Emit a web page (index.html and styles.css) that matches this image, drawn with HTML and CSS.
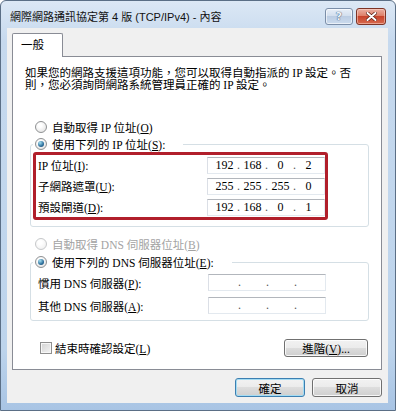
FILE: index.html
```html
<!DOCTYPE html>
<html>
<head>
  <title>網際網路通訊協定第 4 版 (TCP/IPv4) - 內容</title>
  <link rel="stylesheet" href="styles.css">
</head>
<body>
  <div id="window">
    <div id="titlebar">
      <span id="title">網際網路通訊協定第 4 版 (TCP/IPv4) - 內容</span>
      <div id="caption-btns">
        <span class="cap-btn" id="help-btn">?</span>
        <span class="cap-btn" id="close-btn">
          <svg width="11" height="9" viewBox="0 0 11 9">
            <path d="M1.5 1 L9.5 8 M9.5 1 L1.5 8" stroke="#5a1d12" stroke-width="3.4" stroke-linecap="round"/>
            <path d="M1.5 1 L9.5 8 M9.5 1 L1.5 8" stroke="#fff" stroke-width="2" stroke-linecap="round"/>
          </svg>
        </span>
      </div>
    </div>

    <div id="client">
      <div id="tabs"><span class="tab">一般</span></div>

      <div id="panel">
        <p id="intro">如果您的網路支援這項功能，您可以取得自動指派的 IP 設定。否<br>則，您必須詢問網路系統管理員正確的 IP 設定。</p>

        <div class="opts">
          <label class="radio-row"><span class="radio"></span><span>自動取得 IP 位址(<u>O</u>)</span></label>

          <fieldset class="group" id="ip-group">
            <legend><label class="radio-row in-legend"><span class="radio checked"></span><span>使用下列的 IP 位址(<u>S</u>):</span></label></legend>
            <div id="highlight">
              <div class="field-row">
                <span>IP 位址(<u>I</u>):</span>
                <div class="ip"><span class="seg">192</span><span class="dot">.</span><span class="seg">168</span><span class="dot">.</span><span class="seg">0</span><span class="dot">.</span><span class="seg">2</span></div>
              </div>
              <div class="field-row">
                <span>子網路遮罩(<u>U</u>):</span>
                <div class="ip"><span class="seg">255</span><span class="dot">.</span><span class="seg">255</span><span class="dot">.</span><span class="seg">255</span><span class="dot">.</span><span class="seg">0</span></div>
              </div>
              <div class="field-row">
                <span>預設閘道(<u>D</u>):</span>
                <div class="ip"><span class="seg">192</span><span class="dot">.</span><span class="seg">168</span><span class="dot">.</span><span class="seg">0</span><span class="dot">.</span><span class="seg">1</span></div>
              </div>
            </div>
          </fieldset>

          <label class="radio-row disabled" id="dns-auto"><span class="radio"></span><span>自動取得 DNS 伺服器位址(<u>B</u>)</span></label>

          <fieldset class="group" id="dns-group">
            <legend><label class="radio-row in-legend"><span class="radio checked"></span><span>使用下列的 DNS 伺服器位址(<u>E</u>):</span></label></legend>
            <div class="dns-rows">
              <div class="field-row">
                <span>慣用 DNS 伺服器(<u>P</u>):</span>
                <div class="ip"><span class="seg"></span><span class="dot">.</span><span class="seg"></span><span class="dot">.</span><span class="seg"></span><span class="dot">.</span><span class="seg"></span></div>
              </div>
              <div class="field-row">
                <span>其他 DNS 伺服器(<u>A</u>):</span>
                <div class="ip"><span class="seg"></span><span class="dot">.</span><span class="seg"></span><span class="dot">.</span><span class="seg"></span><span class="dot">.</span><span class="seg"></span></div>
              </div>
            </div>
          </fieldset>

          <div id="check-row">
            <label class="check-label"><span class="checkbox"></span><span>結束時確認設定(<u>L</u>)</span></label>
            <span class="btn" id="adv-btn"><span>進階(<u>V</u>)...</span></span>
          </div>
        </div>
      </div>

      <div id="dialog-btns">
        <span class="btn default">確定</span>
        <span class="btn">取消</span>
      </div>
    </div>
  </div>
</body>
</html>
```

FILE: styles.css
```css
* {
  box-sizing: border-box;
}

body {
  margin: 0;
  background: #fff;
  font-family: "Liberation Serif", "Noto Sans CJK TC", serif;
  font-size: 11.5px;
  color: #000;
}

u {
  text-decoration: underline;
  text-underline-offset: 1px;
}

#window {
  width: 396px;
  height: 411px;
  display: flex;
  flex-direction: column;
  border: 1px solid #5b6f86;
  border-radius: 6px 6px 0 0;
  padding: 0 7px 7px 6px;
  background: linear-gradient(#dce8f5, #c6d9ee 40px, #bdd4ec 85%, #a8c4e4);
}

#titlebar {
  height: 27px;
  display: flex;
  justify-content: space-between;
  align-items: flex-start;
}

#title {
  padding: 9px 0 0 3px;
  font-family: "Liberation Sans", "Noto Sans CJK TC", sans-serif;
  font-size: 11px;
  line-height: 15px;
  color: #111;
}

#caption-btns {
  display: flex;
  gap: 3px;
  margin: 7px 2px 0 0;
}

.cap-btn {
  height: 17px;
  display: flex;
  justify-content: center;
  align-items: center;
  border-radius: 3px;
}

#help-btn {
  width: 28px;
  border: 1px solid #7b8ea8;
  background: linear-gradient(#e8eff8, #d3dfee 45%, #bccde3 50%, #cbdbee);
  box-shadow: inset 0 0 0 1px rgba(255,255,255,0.6);
  font-family: "DejaVu Sans", sans-serif;
  font-weight: bold;
  font-size: 11px;
  color: #eef3f9;
  text-shadow: 0 0 1px #3b5473, 0 0 1px #3b5473;
}

#close-btn {
  width: 30px;
  border: 1px solid #7d3426;
  background: linear-gradient(#eab0a3, #de8069 45%, #c8442c 50%, #d66a4f);
  box-shadow: inset 0 0 0 1px rgba(255,220,210,0.5);
}

#client {
  flex: 1;
  background: #f0f0f0;
  padding: 5px 6px 0 5px;
}

#tabs {
  display: flex;
}

.tab {
  width: 51px;
  height: 24px;
  margin-bottom: -1px;
  padding: 3px 0 0 8px;
  background: #fff;
  border: 1px solid #898c95;
  border-bottom: none;
  border-radius: 2px 2px 0 0;
  line-height: 16px;
  position: relative;
  z-index: 1;
}

#panel {
  height: 314px;
  background: #fff;
  border: 1px solid #898c95;
  padding-top: 10px;
}

#intro {
  margin: 0 0 0 12px;
  line-height: 12px;
  white-space: nowrap;
}

.opts {
  margin-top: 28px;
  padding: 0 12px 0 17px;
  display: flex;
  flex-direction: column;
}

.radio-row {
  height: 16px;
  display: flex;
  align-items: center;
  gap: 5px;
  padding-left: 5px;
  white-space: nowrap;
}

.radio-row.in-legend {
  padding-left: 0;
}

.radio-row.disabled {
  color: #a3a3a3;
}

.radio {
  width: 12px;
  height: 12px;
  border-radius: 50%;
  border: 1px solid #8f9193;
  background: radial-gradient(circle at 40% 35%, #ffffff 20%, #dcdcdc 100%);
  position: relative;
  flex-shrink: 0;
}

.radio.checked::after {
  content: "";
  position: absolute;
  left: 2px;
  top: 2px;
  width: 6px;
  height: 6px;
  border-radius: 50%;
  background: radial-gradient(circle at 35% 30%, #a6e1f2, #2d6f9c 60%, #174466);
}

.disabled .radio {
  border-color: #c6c8ca;
  background: radial-gradient(circle at 40% 35%, #fff 20%, #ececec 100%);
}

.group {
  margin: 1px 0 0;
  min-width: 0;
  border: 1px solid #d5dfe5;
  border-radius: 3px;
  padding: 0 0 6px 2px;
}

.group legend {
  padding: 0 18px 0 2px;
}

#highlight {
  width: 295px;
  height: 68px;
  border: 3px solid #b11f2b;
  border-radius: 3px;
  display: flex;
  flex-direction: column;
  gap: 1px;
}

.field-row {
  display: flex;
  justify-content: space-between;
  align-items: center;
  padding-left: 2px;
  white-space: nowrap;
}

#highlight .field-row {
  height: 20px;
}

.ip {
  width: 118px;
  height: 17px;
  display: flex;
  align-items: center;
  padding-left: 5px;
  background: #fff;
  border: 1px solid;
  border-color: #b2b6bc #e3e9ef #e3e9ef #dbdfe6;
  font-size: 12px;
}

.seg {
  width: 23px;
  text-align: center;
}

.dot {
  width: 5px;
  text-align: center;
  color: #555;
}

#dns-auto {
  margin-top: 9px;
}

#dns-group {
  margin-top: 2px;
}

.dns-rows {
  padding: 4px 42px 0 5px;
  display: flex;
  flex-direction: column;
  gap: 6px;
}

.dns-rows .field-row {
  height: 17px;
  padding-left: 0;
}

#check-row {
  margin: 18px 1px 0 0;
  height: 18px;
  padding-left: 10px;
  display: flex;
  justify-content: space-between;
  align-items: center;
}

.check-label {
  display: flex;
  align-items: center;
  gap: 3px;
}

.checkbox {
  width: 12px;
  height: 12px;
  border: 1px solid #8f8f8f;
  background: linear-gradient(135deg, #d3d3d3, #f4f4f4);
  box-shadow: inset 0 0 0 1px #f7f7f7;
}

.btn {
  display: flex;
  justify-content: center;
  align-items: center;
  border: 1px solid #707070;
  border-radius: 3px;
  background: linear-gradient(#f2f2f2, #ebebeb 50%, #dddddd 50%, #cfcfcf);
  box-shadow: inset 0 0 0 1px rgba(255,255,255,0.8);
  white-space: nowrap;
}

#adv-btn {
  width: 84px;
  height: 18px;
}

#dialog-btns {
  margin-top: 8px;
  display: flex;
  justify-content: flex-end;
  gap: 7px;
}

#dialog-btns .btn {
  width: 70px;
  height: 19px;
}

.btn.default {
  border-color: #3c7fb1;
  box-shadow: inset 0 0 0 1px #a4dcf3;
}
```
